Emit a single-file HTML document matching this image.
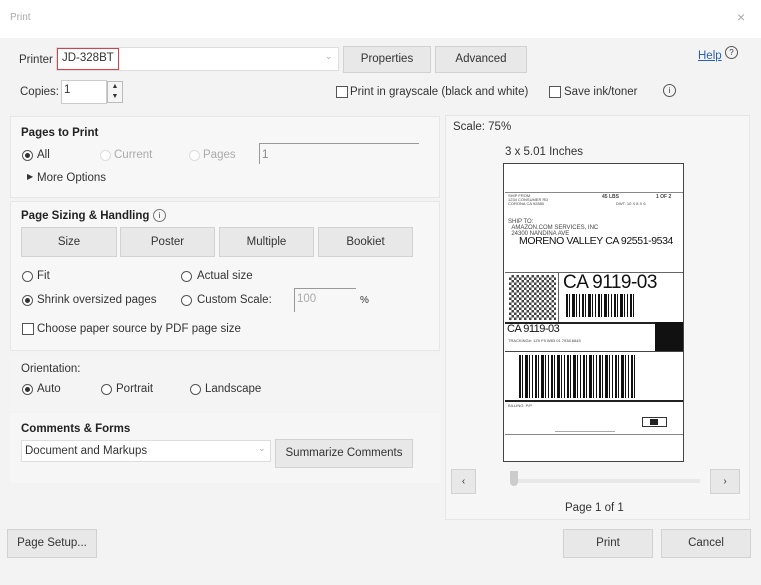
<!DOCTYPE html>
<html><head><meta charset="utf-8"><style>
*{box-sizing:border-box;margin:0;padding:0}
body{width:761px;height:585px;background:#f3f3f3;font-family:"Liberation Sans",sans-serif;font-size:11.5px;color:#333;position:relative;overflow:hidden}
.a{position:absolute;white-space:nowrap}
.btn{position:absolute;background:#e8e8e8;border:1px solid #d2d2d2;text-align:center;color:#333;font-size:11.5px}
.panel{position:absolute;background:#f7f7f7;border:1px solid #e6e6e6}
.rad{position:absolute;width:11px;height:11px;border:1px solid #555;border-radius:50%;background:#fff}
.rad.on::after{content:"";position:absolute;left:2px;top:2px;width:5px;height:5px;border-radius:50%;background:#333}
.rad.dis{border-color:#ddd}
.chk{position:absolute;width:12px;height:12px;border:1px solid #555;background:#fff}
.h{font-weight:bold;color:#222}
.inp{position:absolute;background:#fff;border:1px solid #ccc}
.bc{position:absolute;background:repeating-linear-gradient(90deg,#111 0 2px,#fff 2px 3px,#111 3px 4px,#fff 4px 6px,#111 6px 9px,#fff 9px 10px,#111 10px 11px,#fff 11px 13px,#111 13px 14px,#fff 14px 16px)}
.t{position:absolute;font-size:4px;color:#444;white-space:nowrap}
</style></head><body>
<div class="a" style="left:0;top:0;width:761px;height:38px;background:#fff"></div>
<div class="a" style="left:10px;top:12px;color:#aaa;font-size:10px">Print</div>
<div class="a" style="left:737px;top:9px;color:#aaa;font-size:14px">×</div>

<div class="a" style="left:19px;top:54px">Printer</div>
<div class="inp" style="left:56px;top:47px;width:283px;height:24px;border-color:#ddd"></div>
<div class="a" style="left:57px;top:48px;width:62px;height:22px;border:1.5px solid #d9404a"></div>
<div class="a" style="left:62px;top:52px">JD-328BT</div>
<div class="a" style="left:325px;top:51px;color:#aaa;font-size:9px">⌄</div>
<div class="btn" style="left:343px;top:46px;width:88px;height:27px;line-height:25px">Properties</div>
<div class="btn" style="left:435px;top:46px;width:92px;height:27px;line-height:25px">Advanced</div>
<div class="a" style="left:698px;top:50px;color:#2b5fb3;text-decoration:underline">Help</div>
<div class="a" style="left:725px;top:46px;width:13px;height:13px;border:1px solid #555;border-radius:50%;font-size:8px;text-align:center;line-height:11px">?</div>

<div class="a" style="left:20px;top:86px">Copies:</div>
<div class="inp" style="left:61px;top:80px;width:46px;height:24px"></div>
<div class="a" style="left:64px;top:84px">1</div>
<div class="a" style="left:107px;top:81px;width:16px;height:22px;border:1px solid #bbb;background:#f5f5f5;font-size:7px;text-align:center;line-height:10px">▲<br>▼</div>
<div class="chk" style="left:336px;top:86px"></div>
<div class="a" style="left:350px;top:86px">Print in grayscale (black and white)</div>
<div class="chk" style="left:549px;top:86px"></div>
<div class="a" style="left:564px;top:86px">Save ink/toner</div>
<div class="a" style="left:663px;top:84px;width:13px;height:13px;border:1px solid #555;border-radius:50%;font-size:8px;text-align:center;line-height:11px">i</div>

<div class="panel" style="left:10px;top:116px;width:430px;height:82px"></div>
<div class="a h" style="left:21px;top:127px">Pages to Print</div>
<div class="rad on" style="left:22px;top:150px"></div><div class="a" style="left:37px;top:149px">All</div>
<div class="rad dis" style="left:100px;top:150px"></div><div class="a" style="left:114px;top:149px;color:#aaa">Current</div>
<div class="rad dis" style="left:189px;top:150px"></div><div class="a" style="left:203px;top:149px;color:#aaa">Pages</div>
<div class="a" style="left:259px;top:143px;width:160px;height:21px;border-top:1px solid #999;border-left:1px solid #999"></div>
<div class="a" style="left:262px;top:149px;color:#888">1</div>
<div class="a" style="left:27px;top:172px;font-size:8px">▶</div><div class="a" style="left:37px;top:172px">More Options</div>

<div class="panel" style="left:10px;top:201px;width:430px;height:150px"></div>
<div class="a h" style="left:21px;top:210px">Page Sizing &amp; Handling</div>
<div class="a" style="left:153px;top:209px;width:13px;height:13px;border:1px solid #777;border-radius:50%;font-size:8px;text-align:center;line-height:11px">i</div>
<div class="btn" style="left:21px;top:227px;width:96px;height:30px;line-height:28px">Size</div>
<div class="btn" style="left:120px;top:227px;width:95px;height:30px;line-height:28px">Poster</div>
<div class="btn" style="left:219px;top:227px;width:95px;height:30px;line-height:28px">Multiple</div>
<div class="btn" style="left:318px;top:227px;width:95px;height:30px;line-height:28px">Bookiet</div>
<div class="rad" style="left:22px;top:271px"></div><div class="a" style="left:37px;top:270px">Fit</div>
<div class="rad" style="left:181px;top:271px"></div><div class="a" style="left:197px;top:270px">Actual size</div>
<div class="rad on" style="left:22px;top:295px"></div><div class="a" style="left:37px;top:294px">Shrink oversized pages</div>
<div class="rad" style="left:181px;top:295px"></div><div class="a" style="left:197px;top:294px">Custom Scale:</div>
<div class="a" style="left:294px;top:288px;width:62px;height:24px;border-top:1px solid #999;border-left:1px solid #999"></div>
<div class="a" style="left:297px;top:293px;color:#aaa">100</div>
<div class="a" style="left:360px;top:295px;font-size:10px">%</div>
<div class="chk" style="left:22px;top:323px"></div><div class="a" style="left:37px;top:323px">Choose paper source by PDF page size</div>

<div class="panel" style="left:10px;top:356px;width:430px;height:55px;border:none;background:#f4f4f4"></div>
<div class="a" style="left:21px;top:363px">Orientation:</div>
<div class="rad on" style="left:22px;top:384px"></div><div class="a" style="left:37px;top:383px">Auto</div>
<div class="rad" style="left:101px;top:384px"></div><div class="a" style="left:116px;top:383px">Portrait</div>
<div class="rad" style="left:190px;top:384px"></div><div class="a" style="left:205px;top:383px">Landscape</div>

<div class="panel" style="left:10px;top:413px;width:430px;height:70px;border:none;background:#f6f6f6"></div>
<div class="a h" style="left:21px;top:423px">Comments &amp; Forms</div>
<div class="inp" style="left:21px;top:440px;width:250px;height:22px;border-color:#ddd"></div>
<div class="a" style="left:25px;top:445px">Document and Markups</div>
<div class="a" style="left:258px;top:443px;color:#aaa;font-size:9px">⌄</div>
<div class="btn" style="left:275px;top:439px;width:138px;height:29px;line-height:27px">Summarize Comments</div>

<div class="panel" style="left:445px;top:115px;width:305px;height:405px;background:#f6f6f6"></div>
<div class="a" style="left:453px;top:121px">Scale: 75%</div>
<div class="a" style="left:505px;top:146px">3 x 5.01 Inches</div>

<div class="a" style="left:503px;top:163px;width:181px;height:299px;background:#fff;border:1.5px solid #444"></div>
<div class="a" style="left:505px;top:192px;width:178px;height:1px;background:#888"></div>
<div class="t" style="left:508px;top:194px;line-height:4px">SHIP FROM<br>1234 CONSUMER RD<br>CORONA CA 92880</div>
<div class="t" style="left:602px;top:194px;font-size:5px;font-weight:bold">45 LBS</div>
<div class="t" style="left:656px;top:194px;font-size:5px;font-weight:bold">1 OF 2</div>
<div class="t" style="left:616px;top:201px">DWT: 10 X 8 X 6</div>
<div class="t" style="left:508px;top:219px;font-size:6px;line-height:6px">SHIP TO:<br>&nbsp;&nbsp;AMAZON.COM SERVICES, INC<br>&nbsp;&nbsp;24300 NANDINA AVE</div>
<div class="t" style="left:519px;top:235px;font-size:10.5px;color:#111;letter-spacing:-.4px">MORENO VALLEY CA 92551-9534</div>
<div class="a" style="left:505px;top:272px;width:178px;height:1px;background:#666"></div>
<div class="a" style="left:509px;top:275px;width:47px;height:45px;background:repeating-conic-gradient(#222 0 25%,#fff 0 50%) 0 0/5px 5px;opacity:.85"></div>
<div class="a" style="left:558px;top:272px;width:1px;height:50px;background:#666"></div>
<div class="t" style="left:563px;top:272px;font-size:19px;color:#111;letter-spacing:-.5px">CA 9119-03</div>
<div class="bc" style="left:566px;top:294px;width:68px;height:23px"></div>
<div class="a" style="left:505px;top:322px;width:178px;height:1.5px;background:#222"></div>
<div class="t" style="left:507px;top:323px;font-size:11px;color:#111;letter-spacing:-.5px">CA 9119-03</div>
<div class="t" style="left:508px;top:338px">TRACKING#: 1Z9 F5 W83 01 7938 6845</div>
<div class="a" style="left:655px;top:322px;width:28px;height:29px;background:#111"></div>
<div class="a" style="left:505px;top:351px;width:178px;height:1px;background:#444"></div>
<div class="bc" style="left:519px;top:355px;width:118px;height:43px"></div>
<div class="a" style="left:505px;top:400px;width:178px;height:2px;background:#222"></div>
<div class="t" style="left:508px;top:403px">BILLING: P/P</div>
<div class="a" style="left:642px;top:417px;width:25px;height:10px;border:1px solid #333"></div>
<div class="a" style="left:650px;top:419px;width:8px;height:6px;background:#222"></div>
<div class="a" style="left:555px;top:431px;width:60px;height:1px;background:#aaa"></div>
<div class="a" style="left:505px;top:434px;width:178px;height:1px;background:#888"></div>

<div class="btn" style="left:451px;top:469px;width:25px;height:25px;line-height:23px;font-size:10px">‹</div>
<div class="btn" style="left:710px;top:469px;width:30px;height:25px;line-height:23px;font-size:10px">›</div>
<div class="a" style="left:510px;top:479px;width:190px;height:4px;background:#e8e8e8"></div>
<div class="a" style="left:510px;top:471px;width:8px;height:15px;background:#ccc;border-radius:0 0 4px 4px"></div>
<div class="a" style="left:565px;top:502px">Page 1 of 1</div>

<div class="btn" style="left:7px;top:529px;width:90px;height:29px;line-height:27px">Page Setup...</div>
<div class="btn" style="left:563px;top:529px;width:90px;height:29px;line-height:27px">Print</div>
<div class="btn" style="left:661px;top:529px;width:90px;height:29px;line-height:27px">Cancel</div>
</body></html>
